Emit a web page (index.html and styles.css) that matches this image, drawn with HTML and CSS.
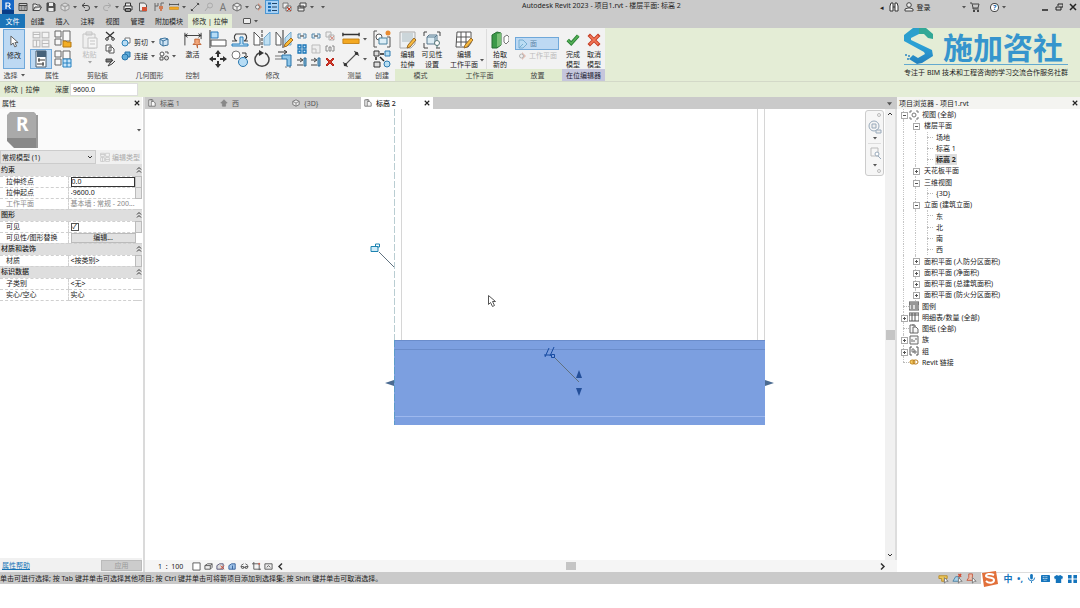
FILE: index.html
```html
<!DOCTYPE html>
<html lang="zh-CN">
<head>
<meta charset="utf-8">
<meta name="viewport" content="width=device-width, initial-scale=1">
<title>Autodesk Revit 2023 - 项目1.rvt - 楼层平面: 标高 2</title>
<link rel="stylesheet" href="styles.css">
</head>
<body>
<svg class="sprite" aria-hidden="true">
  <symbol id="caret" viewBox="0 0 4 4"><path d="M0 1h4L2 3.500z" fill="#555"/></symbol>
  <symbol id="chev" viewBox="0 0 6 8"><path d="M1 3.500l2-2 2 2M1 6.500l2-2 2 2" fill="none" stroke="#333"/></symbol>
  <symbol id="app" viewBox="0 0 14 14"><path d="M1 0h12v14H1z" fill="#1667c6"/><path d="M1 10h12v4H1z" fill="#0a3d86"/><path d="M5 9V3h2.500a1.500 1.500 0 0 1 0 3H5m2.500 0L9.500 9" fill="none" stroke="#fff" stroke-width="1.200"/></symbol>
  <symbol id="home" viewBox="0 0 10 10"><path d="M1 1.500h8v7H1zM1 3.500h8M2.500 5h2m1 0h2.500M2.500 7h2m1 0h2" fill="none" stroke="#444"/></symbol>
  <symbol id="open" viewBox="0 0 10 10"><path d="M1 8.500V2h3l1 1h3v2M1 8.500h6.500L9.500 5H3z" fill="#eee" stroke="#444"/></symbol>
  <symbol id="save" viewBox="0 0 10 10"><path d="M1 1h7l1 1v7H1z" fill="#555" stroke="#444"/><path d="M3 1h4v3H3zM2.500 6h5v3h-5z" fill="#eee"/></symbol>
  <symbol id="sync" viewBox="0 0 10 10"><path d="M1 3l4-2 4 2v4L5 9 1 7zM1 3l4 2 4-2M5 5v4" fill="#ddd" stroke="#999"/></symbol>
  <symbol id="undo" viewBox="0 0 10 10"><path d="M4 1L1 3.500 4 6M1 3.500h5a2.500 2.500 0 0 1 0 5H4" fill="none" stroke="#444"/></symbol>
  <symbol id="redo" viewBox="0 0 10 10"><path d="M6 1l3 2.500L6 6M9 3.500H4a2.500 2.500 0 0 0 0 5h2" fill="none" stroke="#aaa"/></symbol>
  <symbol id="print" viewBox="0 0 10 10"><path d="M1 4h8v4H1zM2.500 4V1h5v3M2.500 6.500h5v3h-5z" fill="#eee" stroke="#333"/></symbol>
  <symbol id="pdf" viewBox="0 0 10 10"><path d="M1.500 1h5l2 2v6h-7z" fill="#eee" stroke="#555"/><path d="M4 5h5v4H4z" fill="#d45235"/></symbol>
  <symbol id="wall" viewBox="0 0 10 10"><path d="M1 1v8M4 1v3H1m6-3h3M7 1v4" fill="none" stroke="#666"/><path d="M5 4h4v3H8v2H6V7H5z" fill="#cf7b54"/></symbol>
  <symbol id="ruler" viewBox="0 0 20 16"><path d="M1 3h18M1 1v4M19 1v4" stroke="#333" stroke-width="1.500" fill="none"/><path d="M1 8h18v5H1z" fill="#f3a821" stroke="#c48115"/></symbol>
  <symbol id="dim" viewBox="0 0 16 16"><path d="M3 13L13 3M1 11l4 4M11 1l4 4" stroke="#555" stroke-width="1.200" fill="none"/><circle cx="3" cy="13" r="1.500" fill="#333"/><circle cx="13" cy="3" r="1.500" fill="#333"/></symbol>
  <symbol id="tag" viewBox="0 0 10 10"><circle cx="6" cy="3.500" r="2.500" fill="none" stroke="#aaa"/><path d="M4 5L1 9" stroke="#aaa"/></symbol>
  <symbol id="ball" viewBox="0 0 10 10"><path d="M1 3l4-2 4 2v4L5 9 1 7z" fill="#eee" stroke="#666"/><path d="M1 3l4 2 4-2M5 5v4" fill="none" stroke="#777"/></symbol>
  <symbol id="section" viewBox="0 0 10 10"><path d="M5 1l4 4-4 4z" fill="#d58e78"/><circle cx="4.500" cy="5" r="2" fill="#eee" stroke="#777"/></symbol>
  <symbol id="cube" viewBox="0 0 10 10"><path d="M1 4l3-2h5v4L7 8H1zM1 4h6v4M7 4l2-2" fill="#eee" stroke="#555"/></symbol>
  <symbol id="sun" viewBox="0 0 10 10"><path d="M1 8V4l3-2h4v6z" fill="#ddd" stroke="#557"/><path d="M5 4l4 4m0-4L5 8" stroke="#d2482f"/></symbol>
  <symbol id="shade" viewBox="0 0 10 10"><path d="M1 8V4l3-2h4v6zM5 4v4" fill="#9fc4ea" stroke="#335d99"/></symbol>
  <symbol id="glasses" viewBox="0 0 10 10"><path d="M1 4l3-2M9 4L6 2M1 5h3v2H2zM6 5h3L8 7H6zM4 6h2" fill="none" stroke="#555"/></symbol>
  <symbol id="crop" viewBox="0 0 10 10"><path d="M2 0v8h8M0 2h8v7" fill="none" stroke="#555"/><path d="M7 1h2v2H7z" fill="#c65"/></symbol>
  <symbol id="reveal" viewBox="0 0 10 10"><path d="M1 2h8v6H1zM3 6l2-2 2 2" fill="#eee" stroke="#555"/></symbol>
  <symbol id="thin" viewBox="0 0 10 10"><path d="M1 1.500h3M1 5h3M1 8.500h3" stroke="#146bb5" stroke-width="2"/><path d="M5 1.500h5M5 5h5M5 8.500h5" stroke="#1e4468"/></symbol>
  <symbol id="closewin" viewBox="0 0 10 10"><path d="M1 1h5v5H1zM4 4h5v5H4z" fill="#eee" stroke="#777"/><path d="M5 5l4 4m0-4L5 9" stroke="#c43d27"/></symbol>
  <symbol id="switch" viewBox="0 0 10 10"><path d="M3 1h6v4H3zM1 4h6v5H1zM1 6h6" fill="#eee" stroke="#444"/></symbol>
  <symbol id="cursor" viewBox="0 0 10 14"><path d="M1 1v10l2.500-2.300L5.300 13l2-.8-1.800-4H9z" fill="#fff" stroke="#555"/></symbol>
  <symbol id="typeprop" viewBox="0 0 16 16"><path d="M1 2h6v5H1zM9 2h6v5H9zM1 9h6v6H1zM9 9h6v6H9zM1 4h6M9 12h6M4 9v6" fill="#f4f4f4" stroke="#bbb"/></symbol>
  <symbol id="family" viewBox="0 0 18 18"><path d="M1 1h6v6H1zM1 9h6v6H1zM9 1h7v10H9z" fill="#f8f8f8" stroke="#666"/><path d="M9 11h3l1 1h4v5H9z" fill="#f2ae26" stroke="#b27612"/></symbol>
  <symbol id="props" viewBox="0 0 18 18"><path d="M4 1h10v16H4z" fill="#fff" stroke="#475b6c"/><path d="M5 1h9v6H5z" fill="#46627a"/><path d="M6 10h7M5 14h7M7 8v4M11 12v4" stroke="#333"/></symbol>
  <symbol id="famtype" viewBox="0 0 18 18"><path d="M1 1h6v6H1zM1 9h6v6H1zM9 1h7v8H9z" fill="#f8f8f8" stroke="#666"/><path d="M9 9h8v8H9zM13 9v8M9 13h8" fill="#c7e5fa" stroke="#2580c0"/></symbol>
  <symbol id="paste" viewBox="0 0 16 18"><path d="M1 3h12v14H1zM4 1h6v3H4z" fill="#eee" stroke="#999"/><path d="M6 7h9v10H6zM8 10h5M8 13h5" fill="#f8f8f8" stroke="#999"/></symbol>
  <symbol id="cut" viewBox="0 0 10 10"><path d="M1 1l8 7M9 1L1 8" stroke="#333" stroke-width="1.300"/><circle cx="2" cy="8" r="1.300" fill="#fff" stroke="#333"/><circle cx="8" cy="8" r="1.300" fill="#fff" stroke="#333"/></symbol>
  <symbol id="copy" viewBox="0 0 10 10"><path d="M1 1h5v6H1zM4 3h3l2 2v4H4z" fill="#fff" stroke="#555"/></symbol>
  <symbol id="brush" viewBox="0 0 10 10"><path d="M1 2h6v3H1z" fill="#777" stroke="#444"/><path d="M8 3L5 6 3 9l4-2 3-3" fill="#ddd" stroke="#444"/></symbol>
  <symbol id="geo" viewBox="0 0 10 10"><path d="M4 1h5v5H4z" fill="#fff" stroke="#777"/><circle cx="4" cy="6" r="3" fill="#b9dcf3" stroke="#2c82ba"/></symbol>
  <symbol id="join" viewBox="0 0 10 10"><path d="M4 1h5v5H4z" fill="#61acd9" stroke="#2673a9"/><circle cx="4" cy="6" r="3" fill="#61acd9" stroke="#2673a9"/></symbol>
  <symbol id="cope" viewBox="0 0 10 10"><path d="M1 2l5-1 3 1v6L4 9 1 7z" fill="#cfe4f4" stroke="#3b739d"/><path d="M4 4l5-2M4 4v5M4 4L1 2" stroke="#3b739d"/></symbol>
  <symbol id="demo" viewBox="0 0 10 10"><circle cx="3" cy="3" r="2" fill="#fff" stroke="#555"/><circle cx="7.500" cy="7" r="2" fill="#ddd" stroke="#555"/><path d="M1 6h3v3H1zM6 1h3v2" fill="none" stroke="#555"/></symbol>
  <symbol id="activate" viewBox="0 0 20 18"><path d="M1 1v14M19 1v7M1 4h18M4 2L1 4l3 2M16 2l3 2-3 2" fill="none" stroke="#333"/><path d="M12 8h5v4l2 2h-4v4l-1-4h-4l2-2z" fill="#f2a679" stroke="#bd6335"/></symbol>
  <symbol id="align" viewBox="0 0 18 18"><path d="M1 0v18" stroke="#333"/><path d="M2 2h7v6H2z" fill="#b7ddf7" stroke="#2579bb"/><path d="M2 10h15v6H2z" fill="#fff" stroke="#555"/></symbol>
  <symbol id="offset" viewBox="0 0 18 18"><path d="M1 11h5a4 4 0 0 1-1-7h9a4 4 0 0 1-1 7h4" fill="none" stroke="#444" stroke-width="1.200"/><path d="M1 14h8V7h3v7h5v2H1z" fill="#b9ddf4" stroke="#287fbc"/></symbol>
  <symbol id="mirror" viewBox="0 0 18 18"><path d="M9 0v18" stroke="#333" stroke-dasharray="3 1"/><path d="M1 2l6 6v7H1z" fill="#fff" stroke="#555"/><path d="M17 2l-6 6v7h6z" fill="#bfe0f3" stroke="#74a8cb"/></symbol>
  <symbol id="mirrorpen" viewBox="0 0 18 18"><path d="M8 0v18" stroke="#333"/><path d="M1 2l5 6v7H1z" fill="#fff" stroke="#555"/><path d="M16 2l-6 6v7h6z" fill="#bfe0f3" stroke="#74a8cb"/><path d="M16 8l2 2-6 6-3 1 1-3z" fill="#f8ba36" stroke="#a66d22"/></symbol>
  <symbol id="move" viewBox="0 0 18 18"><path d="M9 1v16M1 9h16" stroke="#333" stroke-width="2" stroke-dasharray="6 4"/><path d="M9 0l3 4H6zM9 18l3-4H6zM0 9l4-3v6zM18 9l-4-3v6z" fill="#333"/></symbol>
  <symbol id="copym" viewBox="0 0 18 18"><circle cx="5" cy="5" r="4" fill="#fff" stroke="#777"/><circle cx="12" cy="12" r="4.500" fill="#b6dcf5" stroke="#2877ae"/><path d="M11 3h4v4m-2-1l2 2 2-2" fill="none" stroke="#333"/></symbol>
  <symbol id="rotate" viewBox="0 0 18 18"><path d="M6 3a7 7 0 1 0 6 0" fill="none" stroke="#444" stroke-width="1.500"/><path d="M6 0l5 3-5 3z" fill="#333"/></symbol>
  <symbol id="trim" viewBox="0 0 18 18"><path d="M0 6h7M0 9h7M11 16v2M15 16v2" stroke="#777"/><path d="M7 5h9v11h-4V9H7z" fill="#8fc6e8" stroke="#2773a9"/><path d="M3 2h8M9 0l3 2-3 2" fill="none" stroke="#333"/></symbol>
  <symbol id="split" viewBox="0 0 10 8"><path d="M4 2H1v4h3M6 2h3v4H6" fill="#d4e8f5" stroke="#5686a8"/><path d="M3 4h4" stroke="#333"/></symbol>
  <symbol id="array" viewBox="0 0 10 10"><path d="M1 1h3v3H1zM6 1h3v3H6zM1 6h3v3H1zM6 6h3v3H6z" fill="#cde8fb" stroke="#1874b6" stroke-width="1.300"/></symbol>
  <symbol id="scale" viewBox="0 0 10 10"><path d="M1 1h8v8H1zM1 5h4v4" fill="#eee" stroke="#bbb"/></symbol>
  <symbol id="extend" viewBox="0 0 10 10"><path d="M0 3h5M3 1l3 2-3 2M0 8h6" fill="none" stroke="#444"/><path d="M7 1h2v8H7z" fill="#80b9dc" stroke="#316e98"/></symbol>
  <symbol id="pin" viewBox="0 0 10 10"><path d="M3 2H1v5h2M7 2h2v5H7M4 3h2v4H4z" fill="none" stroke="#888"/></symbol>
  <symbol id="del" viewBox="0 0 10 10"><path d="M2 1l3 3 3-3 1 1-3 3 3 3-1 1-3-3-3 3-1-1 3-3-3-3z" fill="#d83b2a" stroke="#b6261b"/></symbol>
  <symbol id="group" viewBox="0 0 18 18"><path d="M4 1H1v16h3M14 7h3v10h-3" fill="none" stroke="#555"/><circle cx="6" cy="7" r="3" fill="#fff" stroke="#555"/><path d="M6 8h8v6H6z" fill="#dceef7" stroke="#4b829f"/><circle cx="15" cy="3" r="2.500" fill="#e98b31"/></symbol>
  <symbol id="similar" viewBox="0 0 18 18"><path d="M1 1h5v5H1zM1 12h6v5H1z" fill="#ddd" stroke="#333"/><path d="M12 1h5v5h-5z" fill="#b9dff3" stroke="#2e7bb0"/><circle cx="14" cy="14" r="3" fill="#b9dff3" stroke="#2e7bb0"/><path d="M7 4h4M3 7v3M7 7l4 4" stroke="#222" stroke-width="1.500"/></symbol>
  <symbol id="edit" viewBox="0 0 18 18"><path d="M1 1h15v12l-4 4H1z" fill="#eef1f3" stroke="#aaa"/><path d="M3 2h11v9H3z" fill="#ccd6da"/><path d="M15 7l2 2-6 7-3 1 1-3z" fill="#f9bb3e" stroke="#9b6c29"/></symbol>
  <symbol id="vis" viewBox="0 0 18 18"><path d="M4 1H1v4M14 1h3v4M1 12v5h4M13 17h4" fill="none" stroke="#444"/><path d="M4 6l2-2h8v7l-2 2H4zM4 6h8v7M12 6l2-2" fill="#dcecf3" stroke="#5a7a90"/><circle cx="14" cy="12" r="2.500" fill="#fff" stroke="#577"/><path d="M14 14v3" stroke="#577"/></symbol>
  <symbol id="plane" viewBox="0 0 18 18"><path d="M2 1h14v11l-3 4H1zM2 6h13M1 11h13M6 1v14M11 1v14" fill="#fff" stroke="#555"/><path d="M16 7l2 2-6 7-3 1 1-3z" fill="#f9bb3e" stroke="#9b6c29"/></symbol>
  <symbol id="pick" viewBox="0 0 18 18"><path d="M1 4l5-3 4 1v12l-4 3H1z" fill="#3c9948" stroke="#246d30"/><path d="M6 3v13l4-2V2z" fill="#79bf75"/><path d="M13 6l3-2 2 2v4l-3 3-2-2z" fill="#fff" stroke="#777"/></symbol>
  <symbol id="tick" viewBox="0 0 16 16"><path d="M2 8l4 4L14 3" fill="none" stroke="#277f34" stroke-width="4"/><path d="M2 8l4 4L14 3" fill="none" stroke="#55ae55" stroke-width="2"/></symbol>
  <symbol id="cross" viewBox="0 0 16 16"><path d="M2 2l12 12M14 2L2 14" stroke="#c43a22" stroke-width="4"/><path d="M3 3l10 10M13 3L3 13" stroke="#f17858" stroke-width="2"/></symbol>
  <symbol id="face" viewBox="0 0 10 10"><path d="M1 1h4l4 4-4 4H1zM1 9l4-4" fill="#badcf3" stroke="#78aed2"/></symbol>
  <symbol id="x" viewBox="0 0 8 8"><path d="M1 1l6 6M7 1L1 7" stroke="#222" stroke-width="1.500"/></symbol>
  <symbol id="sheet" viewBox="0 0 10 10"><path d="M5 1H1v8h3M4 3h3l2 2v4H4zM3 1h3v2" fill="#f7f7f7" stroke="#666"/></symbol>
  <symbol id="elev" viewBox="0 0 10 10"><path d="M1 5l4-4 4 4zM3 5h4v4H3z" fill="#888" stroke="#888"/></symbol>
  <symbol id="views" viewBox="0 0 10 10"><path d="M3 1H1v2M7 1h2v2M1 7v2h2M9 7v2H7" fill="none" stroke="#777"/><circle cx="5" cy="5" r="2" fill="none" stroke="#777"/></symbol>
  <symbol id="groups" viewBox="0 0 10 10"><path d="M3 1H1v8h2M7 1h2v8H7" fill="none" stroke="#555"/><path d="M3 3h2v3H3zM5 5h2v2H5z" fill="none" stroke="#777"/></symbol>
  <symbol id="grid" viewBox="0 0 10 10"><path d="M0 1h10v8H0zM0 3h10M3 1v8M6 1v8" fill="#fff" stroke="#555"/></symbol>
  <symbol id="legend" viewBox="0 0 10 10"><path d="M0 1h10v8H0zM0 3h10M2 5h2m2 0h3M2 7h2m2 0h3" fill="#ddd" stroke="#555"/></symbol>
  <symbol id="doc" viewBox="0 0 10 10"><path d="M1 1h8v8H1zM3 7V4m2 3V5m2-2v2" fill="#f7f7f7" stroke="#666"/></symbol>
  <symbol id="link" viewBox="0 0 10 10"><rect x="1" y="3" width="5" height="4" rx="2" fill="#f5cb62" stroke="#c58b21"/><rect x="4" y="3" width="5" height="4" rx="2" fill="none" stroke="#b77b20"/></symbol>
  <symbol id="find" viewBox="0 0 10 10"><path d="M1 9V4l1-3h2v8zM6 9V1h2l1 3v5zM4 5h2" fill="#fff" stroke="#333"/></symbol>
  <symbol id="user" viewBox="0 0 10 10"><circle cx="5" cy="3" r="2.300" fill="#eee" stroke="#444"/><path d="M1 9V7l3-1h2l3 1v2z" fill="#eee" stroke="#444"/></symbol>
  <symbol id="cart" viewBox="0 0 10 10"><path d="M0 1h2l1 5h5l1-4H3M3 6v1h6" fill="none" stroke="#444"/><path d="M3 8h2v2H3zM7 8h2v2H7z" fill="#444"/></symbol>
  <symbol id="min" viewBox="0 0 8 8"><path d="M1 7h6" stroke="#222" stroke-width="1.500"/></symbol>
  <symbol id="restore" viewBox="0 0 8 8"><path d="M3 3V1h5v3H6M1 4h5v3H1z" fill="none" stroke="#222"/></symbol>
  <symbol id="up" viewBox="0 0 6 6"><path d="M1 4l2-2 2 2" fill="none" stroke="#333"/></symbol>
  <symbol id="down" viewBox="0 0 6 6"><path d="M1 2l2 2 2-2" fill="none" stroke="#333"/></symbol>
  <symbol id="left" viewBox="0 0 6 6"><path d="M4 1L2 3l2 2" fill="none" stroke="#333"/></symbol>
  <symbol id="right" viewBox="0 0 6 6"><path d="M2 1l2 2-2 2" fill="none" stroke="#333"/></symbol>
</svg>

<header class="titlebar">
  <button class="qa app" aria-label="Revit"><svg><use href="#app"/></svg></button>
  <button class="qa" aria-label="主页"><svg><use href="#home"/></svg></button>
  <button class="qa" aria-label="打开"><svg><use href="#open"/></svg></button>
  <button class="qa" aria-label="保存"><svg><use href="#save"/></svg></button>
  <button class="qa drop" aria-label="同步"><svg><use href="#sync"/></svg><svg class="car"><use href="#caret"/></svg></button>
  <button class="qa drop" aria-label="撤销"><svg><use href="#undo"/></svg><svg class="car"><use href="#caret"/></svg></button>
  <button class="qa drop" aria-label="重做"><svg><use href="#redo"/></svg><svg class="car"><use href="#caret"/></svg></button>
  <button class="qa" aria-label="打印"><svg><use href="#print"/></svg></button>
  <button class="qa wide" aria-label="导出"><svg><use href="#pdf"/></svg></button>
  <button class="qa wide" aria-label="墙"><svg><use href="#wall"/></svg></button>
  <button class="qa drop" aria-label="测量"><svg><use href="#ruler"/></svg><svg class="car"><use href="#caret"/></svg></button>
  <button class="qa" aria-label="尺寸标注"><svg><use href="#dim"/></svg></button>
  <button class="qa" aria-label="标记"><svg><use href="#tag"/></svg></button>
  <button class="qa text" aria-label="文字">A</button>
  <button class="qa drop" aria-label="三维视图"><svg><use href="#ball"/></svg><svg class="car"><use href="#caret"/></svg></button>
  <button class="qa" aria-label="剖面"><svg><use href="#section"/></svg></button>
  <button class="qa on" aria-label="细线"><svg><use href="#thin"/></svg></button>
  <button class="qa wide" aria-label="关闭窗口"><svg><use href="#closewin"/></svg></button>
  <button class="qa drop" aria-label="切换窗口"><svg><use href="#switch"/></svg><svg class="car"><use href="#caret"/></svg></button>
  <button class="qa" aria-label="自定义"><svg class="car"><use href="#caret"/></svg></button>
  <h1>Autodesk Revit 2023 - 项目1.rvt - 楼层平面: 标高 2</h1>
  <div class="account">
    <span>◂</span>
    <button class="qa" aria-label="查找"><svg><use href="#find"/></svg></button>
    <button class="login"><svg><use href="#user"/></svg>登录</button>
    <svg class="car"><use href="#caret"/></svg>
    <button class="qa" aria-label="商店"><svg><use href="#cart"/></svg></button>
    <button class="help" aria-label="帮助">?</button>
    <svg class="car"><use href="#caret"/></svg>
  </div>
  <div class="window">
    <button aria-label="最小化"><svg><use href="#min"/></svg></button>
    <button aria-label="还原"><svg><use href="#restore"/></svg></button>
    <button aria-label="关闭"><svg><use href="#x"/></svg></button>
  </div>
</header>

<nav class="tabs">
  <button class="file">文件</button><button>创建</button><button>插入</button><button>注释</button><button>视图</button><button>管理</button><button class="four">附加模块</button><button class="current">修改 | 拉伸</button>
  <button class="mini" aria-label="最小化功能区"><i></i><svg class="car"><use href="#caret"/></svg></button>
</nav>

<section class="ribbon">
  <div class="panel p-select"><div class="tools"><button class="tool active"><svg class="arrow"><use href="#cursor"/></svg>修改</button></div><h2>选择 <svg class="car"><use href="#caret"/></svg></h2></div>
  <div class="panel p-props"><div class="tools two">
    <button aria-label="类型属性"><svg class="m"><use href="#typeprop"/></svg></button><button aria-label="族类别"><svg class="m"><use href="#family"/></svg></button>
    <button class="active" aria-label="属性"><svg class="m"><use href="#props"/></svg></button><button aria-label="族类型"><svg class="m"><use href="#famtype"/></svg></button></div><h2>属性</h2></div>
  <div class="panel p-clip"><div class="tools"><button class="tool off"><svg class="m"><use href="#paste"/></svg>粘贴<svg class="car"><use href="#caret"/></svg></button>
    <div class="stack"><button aria-label="剪切"><svg class="s"><use href="#cut"/></svg></button><button aria-label="复制"><svg class="s"><use href="#copy"/></svg></button><button aria-label="匹配类型"><svg class="s"><use href="#brush"/></svg></button></div></div><h2>剪贴板</h2></div>
  <div class="panel p-geo"><div class="tools geo">
    <button><svg class="s"><use href="#geo"/></svg>剪切<svg class="car"><use href="#caret"/></svg></button><button aria-label="连接端切割"><svg class="s"><use href="#cope"/></svg></button>
    <button><svg class="s"><use href="#join"/></svg>连接<svg class="car"><use href="#caret"/></svg></button><button aria-label="拆除"><svg class="s"><use href="#demo"/></svg><svg class="car"><use href="#caret"/></svg></button></div><h2>几何图形</h2></div>
  <div class="panel p-ctrl"><div class="tools"><button class="tool"><svg class="m"><use href="#activate"/></svg>激活</button></div><h2>控制</h2></div>
  <div class="panel p-modify"><div class="tools"><div class="four-up">
    <button aria-label="对齐"><svg class="m"><use href="#align"/></svg></button><button aria-label="偏移"><svg class="m"><use href="#offset"/></svg></button><button aria-label="镜像拾取轴"><svg class="m"><use href="#mirror"/></svg></button><button aria-label="镜像绘制轴"><svg class="m"><use href="#mirrorpen"/></svg></button>
    <button aria-label="移动"><svg class="m"><use href="#move"/></svg></button><button aria-label="复制"><svg class="m"><use href="#copym"/></svg></button><button aria-label="旋转"><svg class="m"><use href="#rotate"/></svg></button><button aria-label="修剪"><svg class="m"><use href="#trim"/></svg></button></div>
    <div class="three-up">
    <button aria-label="拆分"><svg class="s"><use href="#split"/></svg></button><button aria-label="间隙拆分"><svg class="s"><use href="#split"/></svg></button><button class="off" aria-label="解锁"><svg class="s"><use href="#closewin"/></svg></button>
    <button aria-label="阵列"><svg class="s"><use href="#array"/></svg></button><button aria-label="缩放"><svg class="s"><use href="#scale"/></svg></button><button aria-label="锁定"><svg class="s"><use href="#pin"/></svg></button>
    <button aria-label="延伸"><svg class="s"><use href="#extend"/></svg></button><button aria-label="延伸多个"><svg class="s"><use href="#extend"/></svg></button><button aria-label="删除"><svg class="s"><use href="#del"/></svg></button></div></div><h2>修改</h2></div>
  <div class="panel p-measure"><div class="tools col"><button aria-label="测量"><svg class="m"><use href="#ruler"/></svg><svg class="car"><use href="#caret"/></svg></button><button aria-label="对齐标注"><svg class="m"><use href="#dim"/></svg><svg class="car"><use href="#caret"/></svg></button></div><h2>测量</h2></div>
  <div class="panel p-create"><div class="tools col"><button aria-label="创建组"><svg class="m"><use href="#group"/></svg></button><button aria-label="创建类似"><svg class="m"><use href="#similar"/></svg></button></div><h2>创建</h2></div>
  <div class="panel ctx p-mode"><div class="tools"><button class="tool"><svg class="m"><use href="#edit"/></svg>编辑<br>拉伸</button><button class="tool"><svg class="m"><use href="#vis"/></svg>可见性<br>设置</button></div><h2>模式</h2></div>
  <div class="panel ctx p-plane"><div class="tools"><button class="tool"><svg class="m"><use href="#plane"/></svg>编辑<br>工作平面</button><svg class="car split-car"><use href="#caret"/></svg><button class="tool pick"><svg class="m"><use href="#pick"/></svg>拾取<br>新的</button></div><h2>工作平面</h2></div>
  <div class="panel ctx p-place"><div class="tools col"><button class="active place"><svg class="s"><use href="#face"/></svg>面</button><button class="off place"><svg class="s"><use href="#section"/></svg>工作平面</button></div><h2>放置</h2></div>
  <div class="panel ctx p-inplace"><div class="tools"><button class="tool"><svg class="m"><use href="#tick"/></svg>完成<br>模型</button><button class="tool"><svg class="m"><use href="#cross"/></svg>取消<br>模型</button></div><h2>在位编辑器</h2></div>
  <aside class="brand">
    <div class="brand-row">
      <svg class="brand-logo" viewBox="0 0 30 36"><defs><linearGradient id="lg" x1="0" y1="0" x2="0" y2="1"><stop offset="0" stop-color="#2b9fc9"/><stop offset=".5" stop-color="#2ba0d6"/><stop offset="1" stop-color="#2480bd"/></linearGradient></defs><path d="M0 7l9-7h6v6l-8 4v2l21 10 1 6-11 7-5 1-8-5 4-4 5 3 7-4-1-2L0 13z" fill="url(#lg)"/><path d="M15 0h7l7 6v5l-5-1-4-4h-5z" fill="#32a896"/><path d="M1 26h2v2H1zM4 27h2v2H4zM3 30h2v2H3z" fill="#5a9fc6"/></svg>
      <strong>施加咨社</strong>
    </div>
    <p>专注于 BIM 技术和工程咨询的学习交流合作服务社群</p>
  </aside>
</section>

<div class="options"><span class="mode">修改 | 拉伸</span><label for="depth">深度</label><input id="depth" value="9600.0"></div>

<main class="work">
  <aside class="properties">
    <div class="panel-title"><span>属性</span><button aria-label="关闭"><svg><use href="#x"/></svg></button></div>
    <div class="preview">
      <svg class="thumb" viewBox="0 0 32 36"><path d="M3 0h24l2 2v25H0V3z" fill="#aaa"/><path d="M0 26h31v10H7l-7-7z" fill="#888"/><path d="M29 3h2v33h-2z" fill="#999"/></svg><b>R</b>
      <svg class="car"><use href="#caret"/></svg>
    </div>
    <div class="type"><select aria-label="类型"><option>常规模型 (1)</option></select><svg class="pick-arrow"><use href="#down"/></svg><button disabled><svg><use href="#typeprop"/></svg>编辑类型</button></div>
    <table class="grid">
      <colgroup><col class="c-name"><col><col class="c-key"></colgroup>
      <tbody>
      <tr class="head"><th colspan="2">约束</th><td><svg><use href="#chev"/></svg></td></tr>
      <tr><th>拉伸终点</th><td><input class="focus" aria-label="拉伸终点" value="0.0"></td><td class="k"></td></tr>
      <tr><th>拉伸起点</th><td><input aria-label="拉伸起点" value="-9600.0"></td><td class="k"></td></tr>
      <tr class="ro"><th>工作平面</th><td>基本墙 : 常规 - 200...</td><td></td></tr>
      <tr class="head"><th colspan="2">图形</th><td><svg><use href="#chev"/></svg></td></tr>
      <tr><th>可见</th><td><input type="checkbox" aria-label="可见" checked></td><td class="k"></td></tr>
      <tr><th>可见性/图形替换</th><td><button>编辑...</button></td><td></td></tr>
      <tr class="head"><th colspan="2">材质和装饰</th><td><svg><use href="#chev"/></svg></td></tr>
      <tr><th>材质</th><td>&lt;按类别&gt;</td><td class="k"></td></tr>
      <tr class="head"><th colspan="2">标识数据</th><td><svg><use href="#chev"/></svg></td></tr>
      <tr><th>子类别</th><td>&lt;无&gt;</td><td></td></tr>
      <tr><th>实心/空心</th><td>实心</td><td></td></tr>
      </tbody>
    </table>
    <div class="apply"><a href="#help">属性帮助</a><button disabled>应用</button></div>
  </aside>

  <section class="document">
    <div class="viewtabs">
      <button><svg><use href="#sheet"/></svg>标高 1</button><button><svg><use href="#elev"/></svg>西</button><button><svg><use href="#ball"/></svg>{3D}</button>
      <div class="viewtab current"><svg><use href="#sheet"/></svg><span>标高 2</span><button aria-label="关闭视图"><svg><use href="#x"/></svg></button></div>
      <svg class="car more"><use href="#caret"/></svg>
    </div>
    <div class="view">
      <div class="canvas">
        <svg class="drawing" width="740" height="451" viewBox="0 0 740 451">
          <path d="M256.500 0v231M612.500 0v231M619.500 0v231" stroke="#d6d6d6"/>
          <path d="M249.500 0v231" stroke="#b9cdd2" stroke-dasharray="7 2"/>
          <path d="M249 231h371v85H249z" fill="#7c9fe0"/>
          <path d="M249 231.500h371M249 240.500h371" stroke="#6a8ccb"/>
          <path d="M249 307.500h371" stroke="#9db8ee"/>
          <path d="M249.500 231v85" stroke="#5c9bc9" stroke-dasharray="7 2"/>
          <path d="M234 143l15 15M409 248l25 25" stroke="#60717f"/>
          <path d="M226 137.500h7v5h-7z" fill="#cfeaf7" stroke="#1c83b1"/><path d="M230.500 137v-2h4v3h-2" fill="none" stroke="#1c83b1"/>
          <path d="M400 248l4-9M405 247l4-9M399 246h7" stroke="#174ba1" fill="none"/><path d="M406.500 245.500h3v3h-3z" fill="none" stroke="#174ba1"/>
          <path d="M434 261l3 8h-6zM434 287l3-8h-6z" fill="#234f99"/>
          <path d="M240 274l9-3v6zM629 274l-9-3v6z" fill="#4b6b91"/>
          <path d="M343.500 186.500v9l2-2 2 4 2-1-2-4h3z" fill="#fff" stroke="#555"/>
        </svg>
        <div class="navbar"><i></i>
          <button aria-label="控制盘"><svg viewBox="0 0 14 14"><circle cx="6" cy="6" r="5" fill="none" stroke="#9ab"/><path d="M4 4h4v4H4zM8 10h5v3H8z" fill="#eee" stroke="#9ab"/></svg></button><svg class="car"><use href="#caret"/></svg><hr>
          <button aria-label="缩放"><svg viewBox="0 0 14 14"><path d="M3 2h7v8H3z" fill="none" stroke="#bbb"/><circle cx="9" cy="8" r="2" fill="#fff" stroke="#9ab"/><path d="M10 10l3 3" stroke="#9ab"/></svg></button><svg class="car"><use href="#caret"/></svg><i></i></div>
      </div>
      <div class="vscroll"><svg><use href="#up"/></svg><i></i><svg><use href="#down"/></svg></div>
    </div>
    <div class="viewbar"><span>1&nbsp; :&nbsp; 100</span>
      <button aria-label="详细程度"><svg viewBox="0 0 10 10"><path d="M1 1h8v8H1z" fill="#fff" stroke="#555"/></svg></button><button aria-label="视觉样式"><svg><use href="#cube"/></svg></button><button aria-label="日光"><svg><use href="#sun"/></svg></button><button aria-label="阴影"><svg><use href="#shade"/></svg></button><button aria-label="临时隐藏"><svg><use href="#glasses"/></svg></button><button aria-label="裁剪"><svg><use href="#crop"/></svg></button><button aria-label="显示隐藏"><svg><use href="#reveal"/></svg></button><button aria-label="向左"><svg><use href="#left"/></svg></button>
      <div class="hscroll"><i></i></div><button class="hright" aria-label="向右"><svg><use href="#right"/></svg></button>
    </div>
  </section>

  <aside class="browser">
    <div class="panel-title"><span>项目浏览器 - 项目1.rvt</span><button aria-label="关闭"><svg><use href="#x"/></svg></button></div>
    <ul class="tree">
      <li><i class="e minus"></i><svg><use href="#views"/></svg>视图 (全部)</li>
      <li><i class="g"></i><i class="e minus"></i><span>楼层平面</span></li>
      <li><i class="g"></i><i class="g"></i><i class="b"></i><span>场地</span></li>
      <li><i class="g"></i><i class="g"></i><i class="b"></i><span>标高 1</span></li>
      <li><i class="g"></i><i class="g"></i><i class="b"></i><b>标高 2</b></li>
      <li><i class="g"></i><i class="e plus"></i><span>天花板平面</span></li>
      <li><i class="g"></i><i class="e minus"></i><span>三维视图</span></li>
      <li><i class="g"></i><i class="g"></i><i class="b"></i><span>{3D}</span></li>
      <li><i class="g"></i><i class="e minus"></i><span>立面 (建筑立面)</span></li>
      <li><i class="g"></i><i class="g"></i><i class="b"></i><span>东</span></li>
      <li><i class="g"></i><i class="g"></i><i class="b"></i><span>北</span></li>
      <li><i class="g"></i><i class="g"></i><i class="b"></i><span>南</span></li>
      <li><i class="g"></i><i class="g"></i><i class="b"></i><span>西</span></li>
      <li><i class="g"></i><i class="e plus"></i><span>面积平面 (人防分区面积)</span></li>
      <li><i class="g"></i><i class="e plus"></i><span>面积平面 (净面积)</span></li>
      <li><i class="g"></i><i class="e plus"></i><span>面积平面 (总建筑面积)</span></li>
      <li><i class="g"></i><i class="e plus"></i><span>面积平面 (防火分区面积)</span></li>
      <li><i class="b"></i><svg><use href="#legend"/></svg>图例</li>
      <li><i class="e plus"></i><svg><use href="#grid"/></svg>明细表/数量 (全部)</li>
      <li><i class="b"></i><svg><use href="#sheet"/></svg>图纸 (全部)</li>
      <li><i class="e plus"></i><svg><use href="#doc"/></svg>族</li>
      <li><i class="e plus"></i><svg><use href="#groups"/></svg>组</li>
      <li><i class="b last"></i><svg><use href="#link"/></svg>Revit 链接</li>
    </ul>
  </aside>
</main>

<footer class="status">
  <p>单击可进行选择; 按 Tab 键并单击可选择其他项目; 按 Ctrl 键并单击可将新项目添加到选择集; 按 Shift 键并单击可取消选择。</p>
  <div class="picks">
    <svg viewBox="0 0 12 12"><path d="M1 3h9v3H7v3H4V6H1z" fill="#ecc75d" stroke="#b98b25"/><path d="M7 5v6l2-2h2z" fill="#fff" stroke="#777"/></svg>
    <svg viewBox="0 0 12 12"><path d="M1 9l3-5h4v5z" fill="#a8d2ea" stroke="#4a82a5"/><path d="M7 1l3 3m0-3L7 4" stroke="#d24b32" stroke-width="1.500"/><path d="M7 5v6l2-2h2z" fill="#fff" stroke="#777"/></svg>
    <svg viewBox="0 0 12 12"><path d="M3 1h4v4l2 3H1l2-3z" fill="#efc0ad" stroke="#c65b42"/><path d="M7 5v6l2-2h2z" fill="#fff" stroke="#777"/></svg>
  </div>
  <div class="ime">
    <svg class="sogou" viewBox="0 0 18 18"><path d="M1 3l14-2 2 13-14 3z" fill="#e2703a"/><path d="M13 5c-4-2-8-1-8 1s8 1 8 4-5 4-8 1" fill="none" stroke="#fff" stroke-width="2"/></svg>
    <span>中</span><span>•,</span>
    <svg viewBox="0 0 10 10"><rect x="3.500" y="0" width="3" height="6" rx="1.500" fill="#1474bc"/><path d="M1.500 4a3.500 3.500 0 0 0 7 0M5 8v2" fill="none" stroke="#1474bc"/></svg>
    <svg viewBox="0 0 10 10"><rect x="0" y="1" width="10" height="8" rx="1" fill="#1474bc"/><path d="M2 3h6M2 5h6M3 7h4" stroke="#fff" stroke-dasharray="1 1"/></svg>
    <svg viewBox="0 0 10 10"><path d="M3 1l2 1 2-1 3 2-1 3-1-1v5H2V5L1 6 0 3z" fill="#1474bc"/></svg>
    <svg viewBox="0 0 10 10"><path d="M0 1h4v4H0zM6 1h4v4H6zM0 6h4v4H0zM6 6h4v4H6z" fill="#1474bc"/></svg>
  </div>
</footer>
</body>
</html>
```
FILE: styles.css
```css
* { box-sizing: border-box; }
html, body { height: 100%; }
body {
  margin: 0;
  display: flex;
  flex-direction: column;
  padding-bottom: 24px;
  background: #fff;
  color: #222;
  font: 7px/11px "Noto Sans", "Noto Sans CJK SC", sans-serif;
  white-space: nowrap;
  overflow: hidden;
}
.sprite { position: absolute; width: 0; height: 0; }
button, input, select { font: inherit; color: inherit; margin: 0; padding: 0; border: 0; background: none; border-radius: 0; }
h1, h2, p { margin: 0; font: inherit; }
svg { display: block; flex: none; width: 10px; height: 10px; }
svg.car { width: 4px; height: 4px; }
svg.m { width: 18px; height: 18px; }
svg.s { width: 10px; height: 10px; }
button { display: flex; align-items: center; justify-content: center; }

/* Title bar */
.titlebar { display: flex; align-items: center; height: 14px; background: #cacaca; flex: none; }
.qa { width: 14px; height: 14px; }
.qa.drop { width: 21px; gap: 3px; }
.qa.wide { width: 16px; }
.qa.app { width: 16px; }
.qa.app svg { width: 14px; height: 14px; }
.qa.text { font-size: 10px; color: #777; }
.qa.on { background: #a8d1f5; border: 1px solid #4c97d3; }
.titlebar h1 { flex: 1; padding-left: 192px; line-height: 12px; align-self: flex-start; }
.account { display: flex; align-items: center; width: 126px; gap: 3px; }
.login { gap: 3px; margin-right: 28px; }
.help { width: 9px; height: 9px; margin-left: 5px; border: 1px solid #444; border-radius: 50%; background: #fff; color: #1768aa; font-weight: bold; }
.window { display: flex; width: 74px; justify-content: flex-end; gap: 6px; padding-right: 3px; }
.window svg { width: 8px; height: 8px; }

/* Tabs */
.tabs { display: flex; height: 14px; background: #cacaca; flex: none; }
.tabs button { width: 25px; }
.tabs .file { background: #1a74b8; color: #fff; }
.tabs .four { width: 38px; }
.tabs .current { width: 44px; background: #e4edd6; }
.tabs .mini { width: 36px; gap: 3px; }
.mini i { width: 8px; height: 6px; border: 1px solid #555; background: #eee; border-radius: 1px; }

/* Ribbon */
.ribbon { display: flex; height: 54px; background: #e4edd6; border-bottom: 1px solid #d3d9c8; flex: none; }
.panel { display: flex; flex-direction: column; background: #f2f2f2; flex: none; }
.panel h2 { height: 12px; display: flex; align-items: center; justify-content: center; gap: 3px; color: #444; line-height: 11px; }
.panel.ctx h2 { background: #e0ebcf; }
.panel.p-inplace h2 { background: #c5c6dc; color: #223; }
.tools { flex: 1; display: flex; justify-content: center; padding-top: 1px; min-height: 0; }
.tool { flex-direction: column; justify-content: flex-start; padding-top: 2px; line-height: 10px; }
.tool svg.m { margin-bottom: 1px; }
.active { background: #bdd9f3; border: 1px solid #6fa8da; }
.off { color: #bbb; }
.off svg { opacity: 0.5; }
.p-select { width: 28px; }
.p-select .tool { width: 22px; padding-top: 5px; }
.arrow { width: 9px; height: 13px; margin-bottom: 3px; }
.p-props { width: 48px; }
.two { display: grid; grid-template-columns: 22px 22px; grid-template-rows: 20px 20px; }
.p-clip { width: 43px; }
.p-clip .tools { gap: 6px; }
.stack { display: flex; flex-direction: column; justify-content: space-around; }
.p-geo { width: 61px; }
.geo { display: grid; grid-template-columns: 38px 19px; grid-template-rows: 14px 14px; align-content: center; }
.geo button { justify-content: flex-start; gap: 3px; }
.p-ctrl { width: 25px; }
.p-modify { width: 135px; }
.p-modify .tools { padding-right: 2px; }
.four-up { display: grid; grid-template-columns: repeat(4, 22px); grid-template-rows: 20px 20px; }
.three-up { display: grid; grid-template-columns: repeat(3, 14px); grid-template-rows: repeat(3, 13px); }
.p-measure { width: 29px; }
.col { flex-direction: column; }
.col button { flex: 1; gap: 3px; }
.p-create { width: 26px; }
.p-mode { width: 51px; }
.p-mode .tools { gap: 5px; }
.p-plane { width: 67px; }
.p-plane .tools { gap: 2px; }
.split-car { align-self: flex-end; margin-bottom: 7px; }
.pick { border-left: 1px solid #ddd; padding-left: 4px; }
.p-place { width: 49px; }
.p-place .col { padding: 9px 3px 8px 2px; }
.p-place .place { justify-content: flex-start; padding-left: 2px; gap: 2px; }
.p-place .place.active { color: #5d87a8; }
.p-inplace { width: 43px; }
.p-inplace .tools { gap: 7px; }
.p-inplace svg.m { width: 14px; height: 14px; margin: 2px 0 3px; }

.brand { margin-left: auto; padding-right: 12px; display: flex; flex-direction: column; }
.brand-row { display: flex; height: 39px; gap: 9px; border-bottom: 1px solid #63a9cf; }
.brand-logo { width: 30px; height: 36px; }
.brand strong { font: bold 30px/36px "Noto Sans CJK SC", sans-serif; color: #3695cd; }
.brand p { line-height: 16px; color: #222; }

/* Options bar */
.options { display: flex; align-items: center; height: 15px; background: #e4edd6; flex: none; }
.mode { width: 55px; padding-left: 4px; }
.options input { width: 68px; height: 13px; margin-left: 1px; padding-left: 2px; background: #fff; border: 1px solid #ddd; }

/* Work area */
.work { flex: 1; display: flex; min-height: 0; }
.panel-title { display: flex; justify-content: space-between; align-items: center; height: 12px; background: #f4f4f1; padding: 0 2px; flex: none; }
.panel-title svg { width: 6px; height: 6px; }
.properties { width: 145px; display: flex; flex-direction: column; border-right: 2px solid #dadada; padding-right: 1px; flex: none; }
.preview { position: relative; display: flex; align-items: center; justify-content: space-between; height: 41px; background: #fafafa; padding: 0 1px 0 7px; }
.thumb { width: 32px; height: 36px; }
.preview b { position: absolute; left: 16px; top: 5px; color: #fff; font-size: 19px; line-height: 20px; }
.type { position: relative; display: flex; height: 14px; background: #f1f1f1; gap: 4px; }
.type select { appearance: none; width: 96px; background: #e5e5e5; border: 1px solid #ccc; padding-left: 1px; }
.type .pick-arrow { position: absolute; left: 87px; top: 4px; width: 6px; height: 6px; }
.type button { gap: 2px; color: #aaa; }
.grid { width: 100%; table-layout: fixed; border-collapse: collapse; }
.c-name { width: 68px; }
.c-key { width: 6px; }
.grid tr { height: 11px; }
.grid tr.head { height: 12px; background: #dedede; }
.grid th, .grid td { padding: 0 2px; font-weight: normal; text-align: left; line-height: 10px; border-bottom: 1px dashed #d0d0d0; }
.grid th { padding-left: 6px; }
.grid td:last-child { padding: 0; }
.grid th + td { border-left: 1px dashed #d0d0d0; padding-right: 0; }
.grid .head th { padding-left: 1px; font-weight: 500; }
.grid .head td { border-left: 0; }
.grid .head svg { width: 6px; height: 8px; }
.grid .k { background: #e6e6e6; border: 1px solid #bbb; }
.grid .ro { color: #888; }
.grid input { display: block; width: 100%; height: 10px; line-height: 10px; }
.grid input.focus { border: 1px solid #333; line-height: 8px; }
.grid input[type="checkbox"] { appearance: none; width: 8px; height: 8px; border: 1px solid #555; background: #fff; display: flex; align-items: center; justify-content: center; }
.grid input[type="checkbox"]:checked::after { content: "✓"; font-size: 7px; }
.grid button { width: 100%; height: 10px; background: #e1e1e1; border: 1px solid #bbb; }
.apply { margin-top: auto; height: 14px; display: flex; justify-content: space-between; align-items: center; background: #f1f1f1; padding: 1px 0 1px 2px; }
.apply a { color: #1673b6; }
.apply button { width: 41px; height: 11px; background: #ccc; color: #999; border: 1px solid #bbb; }

.document { flex: 1; min-width: 0; display: flex; flex-direction: column; }
.viewtabs { display: flex; align-items: center; height: 12px; background: #cacaca; flex: none; }
.viewtabs > button { width: 72px; justify-content: flex-start; gap: 4px; padding-left: 3px; color: #555; }
.viewtabs svg { width: 8px; height: 8px; }
.viewtab { width: 72px; height: 12px; display: flex; align-items: center; gap: 4px; padding: 0 3px; background: #fff; font-weight: 500; }
.viewtab button { margin-left: auto; }
.viewtab button svg { width: 6px; height: 6px; }
.viewtabs svg.more { margin-left: auto; margin-right: 5px; width: 5px; height: 5px; }
.view { flex: 1; display: flex; min-height: 0; }
.canvas { position: relative; flex: 1; overflow: hidden; background: #fff; }
.drawing { width: 740px; height: 451px; }
.navbar { position: absolute; right: 1px; top: 1px; width: 19px; height: 66px; display: flex; flex-direction: column; align-items: center; justify-content: space-between; background: #f6f6f6; border: 1px solid #ccc; border-radius: 3px; padding: 2px; }
.navbar i { width: 4px; height: 4px; border: 1px solid #bbb; border-radius: 50%; align-self: flex-end; }
.navbar hr { width: 100%; margin: 0; border: 0; border-top: 1px solid #ddd; }
.navbar button svg { width: 14px; height: 14px; }
.vscroll { width: 12px; display: flex; flex-direction: column; justify-content: space-between; align-items: center; background: #f1f1f1; border-right: 2px solid #ddd; padding: 2px 0; }
.vscroll svg { width: 6px; height: 6px; }
.vscroll i { width: 9px; height: 10px; background: #c5c5c5; }
.viewbar { display: flex; align-items: center; height: 12px; background: #f5f5f5; padding-left: 13px; flex: none; }
.viewbar span:first-child { width: 32px; }
.viewbar button { width: 12px; }
.viewbar button svg { width: 9px; height: 9px; }
.hscroll { flex: 1; display: flex; justify-content: center; padding-right: 12px; }
.hscroll i { width: 10px; height: 8px; background: #c5c5c5; }
.viewbar .hright { width: 30px; }

.browser { width: 183px; display: flex; flex-direction: column; flex: none; }
.tree { height: 259px; margin: 0; padding: 0; list-style: none; display: flex; flex-direction: column; }
.tree li { flex: 1; display: flex; align-items: center; min-height: 0; }
.tree li > svg { margin-right: 3px; }
.tree li > span { padding-left: 3px; }
.tree li > b { margin-left: 2px; padding: 0 1px; background: #ddd; }
.tree i { position: relative; width: 12px; align-self: stretch; flex: none; }
.tree i::before { content: ""; position: absolute; left: 6px; top: 0; bottom: 0; border-left: 1px dotted #c5c5c5; }
.tree i.last::before { bottom: 50%; }
.tree .b::after { content: ""; position: absolute; left: 6px; right: 0; top: 5px; border-top: 1px dotted #bbb; }
.tree .e::after { content: ""; position: absolute; left: 4px; top: 3px; width: 5px; height: 5px; border: 1px solid #aaa; background: linear-gradient(#555, #555) center / 3px 1px no-repeat #fff; }
.tree .plus::after { background: linear-gradient(#555, #555) center / 3px 1px no-repeat, linear-gradient(#555, #555) center / 1px 3px no-repeat #fff; }

/* Status bar */
.status { display: flex; align-items: center; height: 12px; background: #cacaca; flex: none; }
.status p { flex: 1; }
.picks { display: flex; gap: 3px; width: 43px; }
.picks svg { width: 11px; height: 11px; }
.ime { width: 99px; height: 12px; display: flex; align-items: center; justify-content: space-between; background: #fff; color: #1474bc; font-weight: bold; padding-right: 3px; border-top: 1px solid #ddd; }
.ime svg { width: 9px; height: 9px; }
.ime span { font-size: 9px; }
.ime svg.sogou { width: 18px; height: 18px; }
```
